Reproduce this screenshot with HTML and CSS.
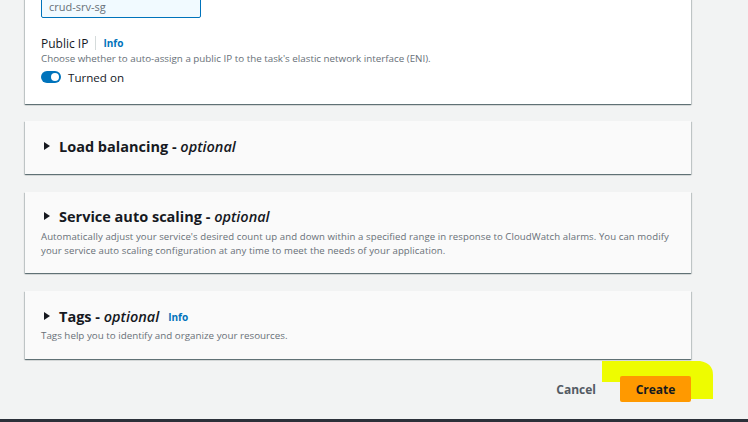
FILE: index.html
```html
<!DOCTYPE html>
<html>
<head>
<meta charset="utf-8">
<link rel="stylesheet" href="styles.css">
</head>
<body>
<div class="page">
  <section class="card card-net">
    <div class="input">crud-srv-sg</div>
    <div class="field">
      <div class="label-row"><span class="label">Public IP</span><span class="sep"></span><a class="info">Info</a></div>
      <div class="desc">Choose whether to auto-assign a public IP to the task's elastic network interface (ENI).</div>
      <div class="toggle-row"><span class="toggle"><span class="knob"></span></span><span class="toggle-label">Turned on</span></div>
    </div>
  </section>

  <section class="card card-collapsed lb">
    <div class="head"><span class="caret"></span><h2>Load balancing - <i>optional</i></h2></div>
  </section>

  <section class="card card-collapsed sas">
    <div class="head"><span class="caret"></span><h2>Service auto scaling - <i>optional</i></h2></div>
    <p class="desc cond">Automatically adjust your service's desired count up and down within a specified range in response to CloudWatch alarms. You can modify your service auto scaling configuration at any time to meet the needs of your application.</p>
  </section>

  <section class="card card-collapsed tags">
    <div class="head"><span class="caret"></span><h2>Tags - <i>optional</i></h2><a class="info">Info</a></div>
    <p class="desc">Tags help you to identify and organize your resources.</p>
  </section>

  <div class="actions">
    <button class="btn-link">Cancel</button>
    <div class="create-wrap">
      <svg class="highlight" width="112" height="40" viewBox="0 0 112 40"><path d="M0 0 H98 Q111 2 111 14 V38 H18 V21 H0 Z" fill="#eefc00"/></svg>
      <button class="btn-primary">Create</button>
    </div>
  </div>
</div>
<div class="bottom-bar"></div>
</body>
</html>
```
FILE: styles.css
```css
* { box-sizing: border-box; }
html, body { margin: 0; padding: 0; }
body {
  background: #f2f3f3;
  font-family: "Open Sans", "Noto Sans", sans-serif;
  color: #16191f;
  height: 422px;
  overflow: hidden;
  position: relative;
}
.page {
  width: 666px;
  margin-left: 25px;
  display: flex;
  flex-direction: column;
  gap: 18px;
}
.card {
  background: #fafafa;
  box-shadow: 0 1px 1px 0 rgba(0,28,36,.45), 1px 1px 1px 0 rgba(0,28,36,.15), -1px 1px 1px 0 rgba(0,28,36,.15);
  padding: 0 16px;
}
.card-net {
  background: #fff;
  margin-top: -18px;
  margin-bottom: -1px;
  padding-top: 4px;
  padding-bottom: 18px;
}
.input {
  width: 160px;
  height: 32px;
  border: 1px solid #0073bb;
  border-radius: 2px;
  background: #f1faff;
  color: #687078;
  font-size: 11px;
  padding: 13px 7px 0;
  line-height: 14px;
}
.field { margin-top: 16px; }
.label-row { display: flex; align-items: center; height: 18px; }
.label { font-size: 12px; color: #16191f; }
.sep { width: 1px; height: 14px; background: #d5dbdb; margin: 0 7px; }
.info { color: #0073bb; font-weight: 700; font-size: 10px; }
.desc { font-size: 9.8px; color: #687078; line-height: 14px; margin: 0; }
.field .desc { margin-top: 0; }
.toggle-row { display: flex; align-items: center; margin-top: 2px; height: 18px; }
.toggle {
  width: 20px; height: 12px; border-radius: 6px; background: #0073bb;
  display: inline-flex; align-items: center; justify-content: flex-end; padding: 0 2px;
}
.knob { width: 8px; height: 8px; border-radius: 50%; background: #fff; }
.toggle-label { font-size: 11.6px; margin-left: 7px; }
.head { display: flex; align-items: center; height: 20px; }
.caret {
  width: 0; height: 0;
  border-top: 4px solid transparent; border-bottom: 4px solid transparent;
  border-left: 6px solid #16191f;
  margin-left: 3px; margin-right: 9px;
}
h2 { margin: 0; font-size: 14.5px; font-weight: 700; color: #16191f; }
h2 i { font-weight: 600; }
.head .info { margin-left: 9px; margin-top: 2px; }
.lb { padding-top: 15px; height: 53px; }
.sas { padding-top: 14px; height: 81px; }
.sas .desc { margin-top: 4px; }
.cond { letter-spacing: 0.08px; font-size: 9.6px; }
.tags { padding-top: 15px; height: 68px; }
.tags .desc { margin-top: 3px; }
.actions {
  display: flex;
  justify-content: flex-end;
  align-items: center;
  margin-top: -1px;
  height: 26px;
  position: relative;
}
.btn-link {
  background: none; border: none; font-family: inherit; font-weight: 700;
  font-size: 12px; color: #545b64; padding: 0; margin-right: 24px;
}
.create-wrap { position: relative; width: 71px; height: 26px; }
.highlight { position: absolute; left: -18px; top: -15px; }
.btn-primary {
  position: relative;
  width: 71px; height: 26px;
  background: #ff9900; border: none; border-radius: 2px;
  font-family: inherit; font-weight: 700; font-size: 12px; color: #16191f;
}
.bottom-bar {
  position: absolute; left: 0; right: 0; bottom: 0; height: 3px; background: #2b3039;
}
```
